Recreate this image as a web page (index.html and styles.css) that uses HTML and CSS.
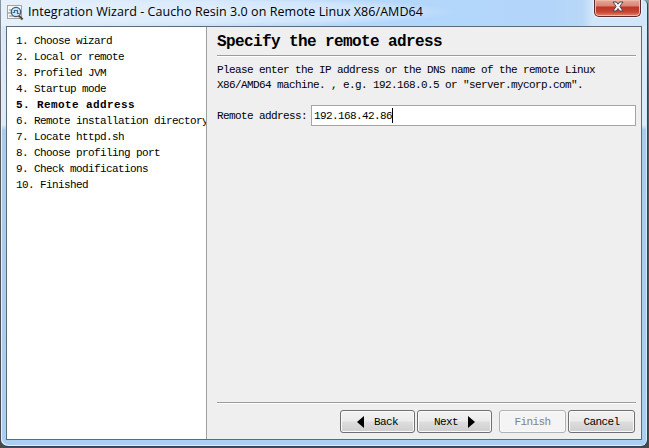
FILE: index.html
```html
<!DOCTYPE html>
<html lang="en">
<head>
<meta charset="utf-8">
<title>Integration Wizard</title>
<link rel="stylesheet" href="styles.css">
</head>
<body>
<div class="window">
  <header class="titlebar">
    <svg class="app-icon" width="17" height="16" viewBox="0 0 17 16">
      <rect x=".5" y=".5" width="14" height="13" fill="#f7f7f5" stroke="#a3a4a2"/>
      <path d="M2 5h3M1 8h3M2 11h4" stroke="#888"/>
      <path d="M11.500 10.500l4 4" stroke="#3f4850" stroke-width="2.4"/>
      <path d="M11.500 11.500l3 3" stroke="#b08a55" stroke-width=".8"/>
      <circle cx="9" cy="7" r="4.700" fill="#cfe6f2" stroke="#4b5b69" stroke-width="1.300"/>
      <path d="M5.500 7.500h2v-2h3v3h2" fill="none" stroke="#2f6f9f" stroke-width="1.200"/>
    </svg>
    <span class="title">Integration Wizard - Caucho Resin 3.0 on Remote Linux X86/AMD64</span>
    <button class="close" aria-label="Close">
      <svg width="12" height="11" viewBox="0 0 12 11">
        <path d="M1 1h3.300l1.700 2.200L7.700 1H11L7.900 5.400 11 10H7.700L6 7.600 4.300 10H1l3.100-4.600z" fill="#f6f6f6" stroke="#53414a" stroke-width="1"/>
      </svg>
    </button>
  </header>
  <div class="client">
    <nav class="steps">
      <div>1. Choose wizard</div>
      <div>2. Local or remote</div>
      <div>3. Profiled JVM</div>
      <div>4. Startup mode</div>
      <div class="current">5. Remote address</div>
      <div>6. Remote installation directory</div>
      <div>7. Locate httpd.sh</div>
      <div>8. Choose profiling port</div>
      <div>9. Check modifications</div>
      <div>10. Finished</div>
    </nav>
    <main class="page">
      <h1>Specify the remote adress</h1>
      <p>Please enter the IP address or the DNS name of the remote Linux<br>X86/AMD64 machine. , e.g. 192.168.0.5 or "server.mycorp.com".</p>
      <div class="field">
        <span>Remote address:</span>
        <div class="input">192.168.42.86<i class="caret"></i></div>
      </div>
      <footer class="actions">
        <button class="wide"><svg width="7" height="12" viewBox="0 0 7 12"><path d="M7 0v12L0 6z"/></svg>Back</button>
        <button class="wide next">Next<svg width="7" height="12" viewBox="0 0 7 12"><path d="M0 0v12l7-6z"/></svg></button>
        <button class="finish" disabled>Finish</button>
        <button>Cancel</button>
      </footer>
    </main>
  </div>
</div>
</body>
</html>
```
FILE: styles.css
```css
* { box-sizing: border-box; }
body {
  margin: 0;
  width: 649px;
  height: 448px;
  overflow: hidden;
  background: linear-gradient(#8f979f, #5b5d62 20%, #4a484b);
  font: 11px/16px "Liberation Mono", monospace;
  letter-spacing: -0.6px;
  color: #000;
}
.window {
  width: 647px;
  height: 447px;
  margin-left: 1px;
  padding: 0 5px;
  border: solid #34404c;
  border-width: 0 1px 1px 0;
  border-radius: 0 5px 7px 7px;
  background:
    radial-gradient(ellipse 240px 15px at 215px 12px, #e6f2fdcc, #e6f2fd88 70%, #e6f2fd00) no-repeat,
    linear-gradient(90deg, #e6f1fb 0, #d8e8f9 120px, #bddafa 260px, #b3d6fb 400px, #b2d5f9 550px, #b9d8f8 582px, #d3e6f9 592px, #d3e6f9 100%) 0 0 / 100% 26px no-repeat,
    linear-gradient(#d9e8f7 0, #dceafa 125px, #a9cbec 130px, #abcff2 100%);
  box-shadow: inset 1px -1px 0 #e2f2ff, inset -1px 0 0 #c9f0ff;
}
.titlebar {
  display: flex;
  height: 26px;
  padding: 0 1px 0 1px;
}
.app-icon { margin-top: 5px; flex: none; }
.title {
  flex: 1;
  margin-left: 4px;
  font: 12.5px/24px "Open Sans", sans-serif;
  letter-spacing: 0.06px;
  white-space: nowrap;
}
.close {
  display: flex;
  justify-content: center;
  width: 47px;
  height: 17px;
  padding: 1px 0 0;
  border: 1px solid #5a2a2c;
  border-top: 0;
  border-radius: 0 0 5px 5px;
  background: linear-gradient(#e5a99b 0, #d98474 6px, #bd3424 7px, #c84632 12px, #df8770 100%);
  box-shadow: inset 0 0 0 1px #f0b8a8, 0 0 1px 1px #e8f4ff;
}
.client {
  display: flex;
  width: 636px;
  height: 414px;
  border: 1px solid #5b6b7c;
  background: #efefef;
}
.steps {
  width: 200px;
  padding: 6px 0 0 9px;
  overflow: hidden;
  background: #fff;
  border-right: 1px solid #a0a0a0;
  white-space: nowrap;
}
.current { font-weight: bold; letter-spacing: 0.4px; }
.page {
  flex: 1;
  display: flex;
  flex-direction: column;
  padding: 0 5px 6px 10px;
}
h1 {
  margin: 0;
  height: 29px;
  padding-top: 3px;
  border-bottom: 1px solid #9c9c9c;
  box-shadow: 0 1px #fff;
  font-size: 16px;
  line-height: 24px;
  letter-spacing: -0.6px;
}
p { margin: 7px 0 0; line-height: 15px; white-space: nowrap; }
.field {
  display: flex;
  align-items: center;
  gap: 4px;
  margin-top: 12px;
}
.field span { width: 90px; white-space: nowrap; }
.input {
  flex: 1;
  display: flex;
  align-items: center;
  height: 21px;
  padding-left: 2px;
  border: 1px solid #a5a5a5;
  background: #fff;
}
.caret { width: 1px; height: 15px; background: #000; }
.actions {
  display: flex;
  justify-content: flex-end;
  gap: 2px;
  margin-top: auto;
  padding: 7px 1px 0 0;
  border-top: 1px solid #9c9c9c;
  box-shadow: inset 0 1px #fff;
}
.actions button {
  display: flex;
  align-items: center;
  justify-content: center;
  gap: 10px;
  width: 67px;
  height: 23px;
  padding: 1px 0 0;
  border: 1px solid #707070;
  border-radius: 3px;
  background: linear-gradient(#f2f2f2, #ebebeb 48%, #dddddd 52%, #cfcfcf);
  box-shadow: inset 0 0 0 1px #fafafa;
  font: inherit;
  letter-spacing: inherit;
  color: #000;
}
.actions .wide { width: 75px; }
.actions .finish {
  margin-left: 5px;
  border-color: #adb2b5;
  background: #f4f4f4;
  color: #838383;
}
```
